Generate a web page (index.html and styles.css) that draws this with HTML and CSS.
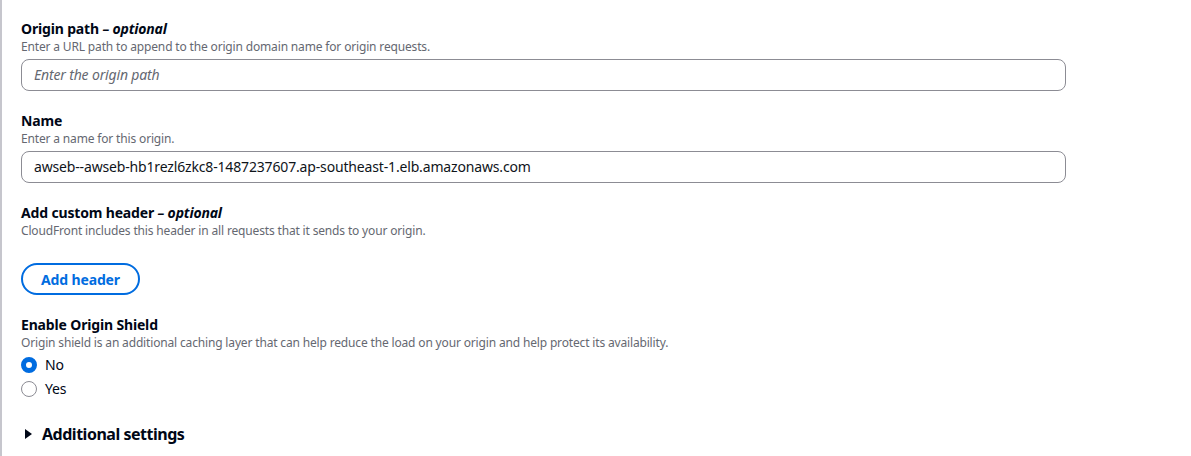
FILE: index.html
```html
<!DOCTYPE html>
<html>
<head>
<meta charset="utf-8">
<link rel="stylesheet" href="styles.css">
</head>
<body>
<div class="panel">
  <div class="field">
    <div class="label">Origin path <span class="opt">– optional</span></div>
    <div class="desc">Enter a URL path to append to the origin domain name for origin requests.</div>
    <div class="input placeholder">Enter the origin path</div>
  </div>
  <div class="field">
    <div class="label">Name</div>
    <div class="desc">Enter a name for this origin.</div>
    <div class="input">awseb--awseb-hb1rezl6zkc8-1487237607.ap-southeast-1.elb.amazonaws.com</div>
  </div>
  <div class="field">
    <div class="label">Add custom header <span class="opt">– optional</span></div>
    <div class="desc">CloudFront includes this header in all requests that it sends to your origin.</div>
    <button class="btn">Add header</button>
  </div>
  <div class="field">
    <div class="label">Enable Origin Shield</div>
    <div class="desc">Origin shield is an additional caching layer that can help reduce the load on your origin and help protect its availability.</div>
    <div class="radios">
      <label class="radio"><span class="dot checked"></span>No</label>
      <label class="radio"><span class="dot"></span>Yes</label>
    </div>
  </div>
  <div class="expander"><span class="caret"></span>Additional settings</div>
</div>
</body>
</html>
```
FILE: styles.css
```css
html, body {
  margin: 0;
  padding: 0;
  background: #ffffff;
}
body {
  font-family: "Noto Sans", "Open Sans", Arial, sans-serif;
  color: #000716;
  letter-spacing: -0.01em;
}
.panel {
  border-left: 2px solid #c6c6cd;
  padding: 19px 0 0 19px;
  min-height: 456px;
  box-sizing: border-box;
}
.field {
  margin-bottom: 20px;
  width: 1045px;
}
.label {
  font-size: 14px;
  line-height: 20px;
  font-weight: 700;
}
.opt {
  font-style: italic;
  font-weight: 700;
}
.desc {
  font-size: 12px;
  line-height: 16px;
  color: #656871;
}
.input {
  margin-top: 4px;
  height: 32px;
  box-sizing: border-box;
  border: 1px solid #8c8c94;
  border-radius: 8px;
  padding: 0 12px;
  font-size: 14px;
  line-height: 30px;
  color: #0f141a;
}
.placeholder {
  font-style: italic;
  color: #656871;
}
.btn {
  display: block;
  margin-top: 24px;
  height: 32px;
  padding: 0 18px;
  border: 2px solid #006ce0;
  border-radius: 20px;
  background: #ffffff;
  color: #006ce0;
  font-family: inherit;
  font-size: 14px;
  font-weight: 700;
  letter-spacing: -0.01em;
}
.radios {
  display: flex;
  flex-direction: column;
  gap: 4px;
  margin-top: 4px;
}
.radio {
  display: flex;
  align-items: center;
  gap: 8px;
  font-size: 14px;
  line-height: 20px;
}
.dot {
  width: 16px;
  height: 16px;
  box-sizing: border-box;
  border-radius: 50%;
  border: 1px solid #8c8c94;
}
.dot.checked {
  border: 5px solid #006ce0;
  background: #ffffff;
}
.expander {
  display: flex;
  align-items: center;
  gap: 10px;
  font-size: 16px;
  line-height: 22px;
  font-weight: 700;
  letter-spacing: -0.03em;
  margin-top: 24px;
}
.caret {
  width: 0;
  height: 0;
  border-top: 5.5px solid transparent;
  border-bottom: 5.5px solid transparent;
  border-left: 7px solid #000716;
  margin-left: 4px;
}
```
